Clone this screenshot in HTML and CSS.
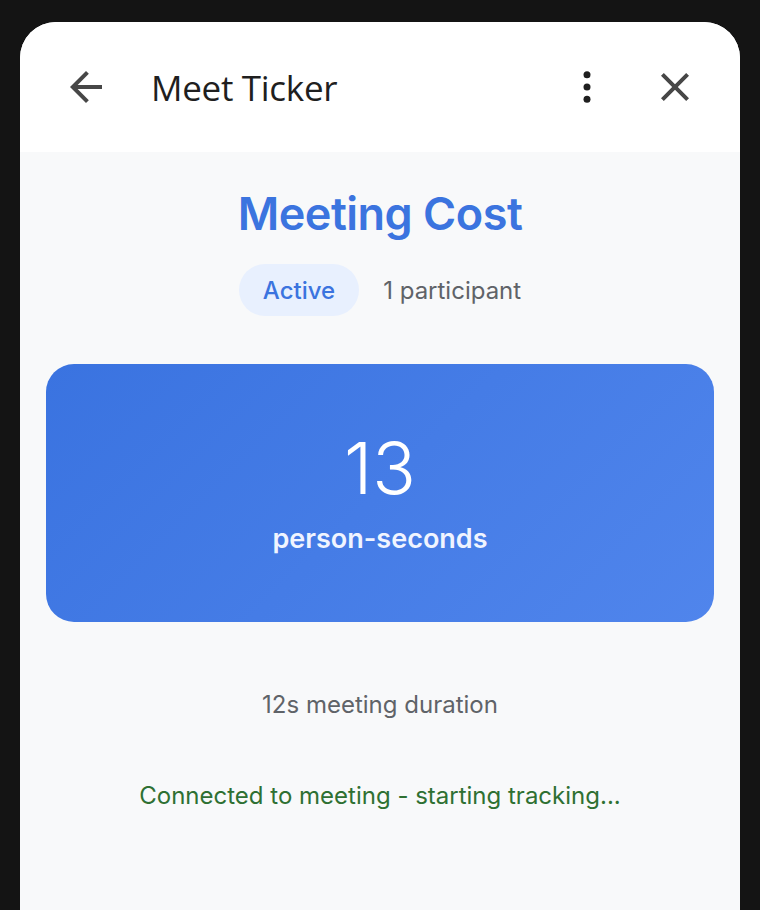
FILE: index.html
```html
<!DOCTYPE html>
<html>
<head>
<meta charset="utf-8">
<link rel="stylesheet" href="styles.css">
</head>
<body>
<div class="panel">
  <header class="topbar">
    <button class="icon-btn back" aria-label="Back">
      <svg width="48" height="48" viewBox="0 0 24 24"><path d="M20 11H7.83l5.59-5.59L12 4l-8 8 8 8 1.41-1.41L7.83 13H20v-2z" fill="#474747"/></svg>
    </button>
    <h1 class="app-title">Meet Ticker</h1>
    <div class="spacer"></div>
    <button class="icon-btn more" aria-label="More">
      <svg width="48" height="48" viewBox="0 0 24 24"><circle cx="12" cy="5.9" r="1.75" fill="#1f1f1f"/><circle cx="12" cy="12" r="1.75" fill="#1f1f1f"/><circle cx="12" cy="18.1" r="1.75" fill="#1f1f1f"/></svg>
    </button>
    <button class="icon-btn close" aria-label="Close">
      <svg width="48" height="48" viewBox="0 0 24 24"><path d="M19 6.41 17.59 5 12 10.59 6.41 5 5 6.41 10.59 12 5 17.59 6.41 19 12 13.41 17.59 19 19 17.59 13.41 12z" fill="#474747"/></svg>
    </button>
  </header>
  <main class="content">
    <h2 class="title">Meeting Cost</h2>
    <div class="status-row">
      <span class="pill">Active</span>
      <span class="participants">1 participant</span>
    </div>
    <section class="cost-card">
      <div class="cost-value">13</div>
      <div class="cost-unit">person-seconds</div>
    </section>
    <p class="duration">12s meeting duration</p>
    <p class="status-msg">Connected to meeting - starting tracking...</p>
  </main>
</div>
</body>
</html>
```
FILE: styles.css
```css
* { box-sizing: border-box; }
html, body { margin: 0; padding: 0; }
body {
  background: #141414;
  width: 760px;
  height: 910px;
  overflow: hidden;
  padding: 22px 20px 0;
  font-family: Inter, "Noto Sans", sans-serif;
}
.panel {
  width: 720px;
  height: 888px;
  border-radius: 36px 36px 0 0;
  overflow: hidden;
  background: #f8f9fa;
  display: flex;
  flex-direction: column;
}
.topbar {
  height: 130px;
  background: #fff;
  display: flex;
  align-items: center;
  padding: 0 41px 0 42px;
}
.icon-btn {
  border: 0;
  background: none;
  padding: 0;
  width: 48px;
  height: 48px;
  display: flex;
  align-items: center;
  justify-content: center;
}
.app-title {
  margin: 0 0 0 41px;
  font-family: "Open Sans", sans-serif;
  font-weight: 400;
  font-size: 35px;
  color: #1f1f1f;
  letter-spacing: -0.3px;
}
.spacer { flex: 1; }
.more { margin-right: 40px; }
.content {
  flex: 1;
  display: flex;
  flex-direction: column;
  align-items: center;
  padding: 28px 26px 0;
}
.title {
  margin: 0;
  font-size: 45px;
  font-weight: 600;
  color: #3b74df;
  letter-spacing: -0.5px;
  line-height: 68px;
}
.status-row {
  margin-top: 16px;
  display: flex;
  align-items: center;
  gap: 24px;
}
.pill {
  background: #e8f0fe;
  color: #3b74df;
  font-size: 24px;
  font-weight: 500;
  padding: 0 24px;
  height: 52px;
  line-height: 54px;
  border-radius: 26px;
}
.participants {
  font-size: 24px;
  color: #5f6368;
}
.cost-card {
  margin-top: 48px;
  width: 668px;
  height: 258px;
  border-radius: 28px;
  background: linear-gradient(135deg, #3a73e0 0%, #5085ec 100%);
  display: flex;
  flex-direction: column;
  align-items: center;
  justify-content: center;
  color: #fff;
}
.cost-value {
  font-size: 72px;
  font-weight: 300;
  line-height: 80px;
  margin-top: -4px;
}
.cost-unit {
  font-size: 27px;
  font-weight: 600;
  color: #f0f4ff;
  margin-top: 14px;
}
.duration {
  margin: 68px 0 0;
  font-size: 24px;
  color: #5f6368;
}
.status-msg {
  margin: 62px 0 0;
  font-size: 24px;
  color: #2e7032;
}
```
